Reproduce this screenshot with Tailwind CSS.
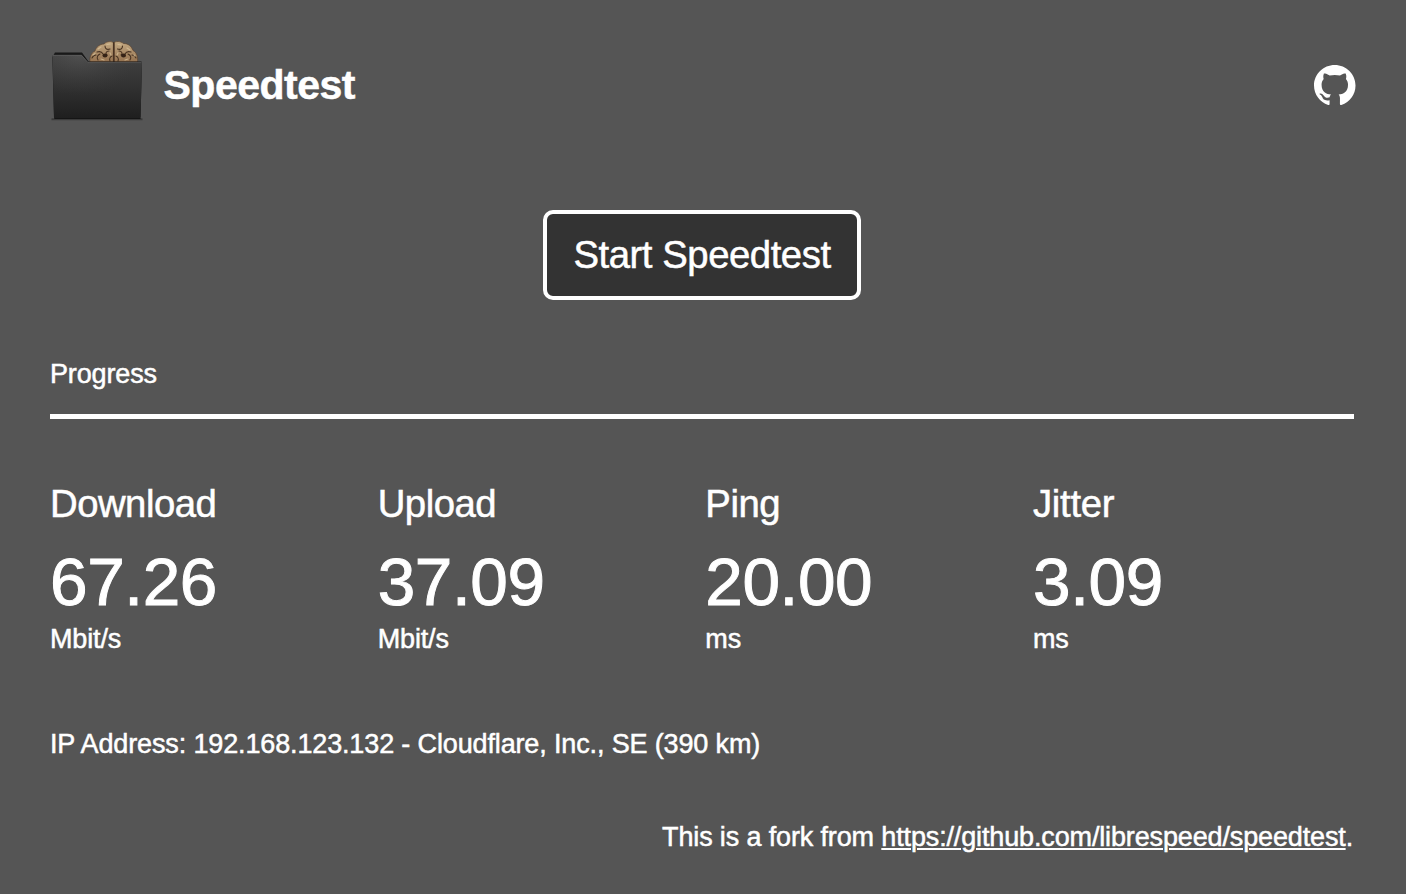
<!DOCTYPE html>
<html lang="en">
<head>
<meta charset="utf-8">
<title>Speedtest</title>
<script src="https://cdn.jsdelivr.net/npm/@tailwindcss/browser@4"></script>
</head>
<body class="h-[894px] overflow-hidden bg-[#555] pl-[50px] pr-[52px] text-[27px] leading-8 tracking-[-0.14px] text-white antialiased [-webkit-text-stroke:0.5px_white] font-['Helvetica','Liberation_Sans',sans-serif]">
<header class="flex h-[170px] items-center">
  <svg class="-ml-0.5 -mt-2 h-[84px] w-[98px] shrink-0" viewBox="48 38 98 84" aria-hidden="true">
    <defs>
      <linearGradient id="front" x1="0" y1="0" x2="0" y2="1"><stop offset="0" stop-color="#414141"/><stop offset=".45" stop-color="#333"/><stop offset="1" stop-color="#1e1e1e"/></linearGradient>
      <radialGradient id="sheen" cx=".3" cy="0" r=".65"><stop offset="0" stop-color="#666" stop-opacity=".4"/><stop offset="1" stop-color="#444" stop-opacity="0"/></radialGradient>
      <linearGradient id="brain" x1="0" y1="0" x2="0" y2="1"><stop offset="0" stop-color="#c4aa83"/><stop offset="1" stop-color="#94714f"/></linearGradient>
      <filter id="fold" x="-10%" y="-10%" width="120%" height="120%"><feGaussianBlur stdDeviation=".4"/></filter>
    </defs>
    <path d="M51.500 118.300H142.500" stroke="#222" stroke-opacity=".5" stroke-width="2"/>
    <g filter="url(#fold)">
      <path d="M90 61c-.5-5 1-9 5-11 1-4 5-7 9-7 3-3 8-3 9.500-1 2-2 7-2 10 .5 5 0 8 3 9.500 7 4 2 5 7 4.500 11.500z" fill="url(#brain)" stroke="#5c442f" stroke-width=".7"/>
      <g fill="none" stroke="#493321" stroke-width="1.100" stroke-linecap="round">
        <path d="M113.800 42v19" stroke-width="1.800"/>
        <path d="M97 51c3-1 5 0 6 2M105 45c0 3 2 4 5 3M98 59c-2-3 0-5 2-6M109 50c-3 0-4 3-2 4M92 57c1-2 2-3 4-3M110 60c-1-2 0-4 2-5M131 51c-3-1-5 0-6 2M122.500 45c0 3-2 4-5 3M130 59c2-3 0-5-2-6M119 50c3 0 4 3 2 4M136 57c-1-2-2-3-4-3M118 60c1-2 0-4-2-5"/>
      </g>
      <g fill="#362416"><ellipse cx="105" cy="54.500" rx="2.500" ry="2"/><ellipse cx="123.500" cy="54.500" rx="2.500" ry="2"/></g>
      <g fill="none" stroke="#dac49c" stroke-width="1.200" stroke-linecap="round" opacity=".7">
        <path d="M98 48l3-2M107 43.500l3-.5M93 54l2-1.500M101 58l3 1M110 52l1 2M118 43.500l3 .5M127 47l3 2M118 52l-1 2M134 54l1 1M125 59l3-1"/>
      </g>
    </g>
    <path d="M53.500 54l1.500-2.500h27l6.500 9h53l.5 2-1.500 54H54L52.300 56z" fill="#191919"/>
    <path d="M52.500 54H81.500l6.500 7.500H142l-1.500 55q0 1.500-1.500 1.500H55.500q-1.500 0-1.500-1.500z" fill="url(#front)"/>
    <path d="M52.500 54H81.500l6.500 7.500H142l-1.500 55H54z" fill="url(#sheen)"/>
    <path d="M53 54.300H81.500l6.500 7.300H141.500" fill="none" stroke="#626262" stroke-width=".7"/>
    <path d="M54.500 117.500H140.500" stroke="#151515"/>
  </svg>
  <h1 class="ml-[17.5px] text-[41px] leading-none font-bold tracking-[-0.5px]">Speedtest</h1>
  <a class="-mr-[1.5px] ml-auto" href="https://github.com" aria-label="GitHub">
    <svg class="h-[41px] w-[41.5px]" viewBox="0 0 16 16" preserveAspectRatio="none" fill="white"><path d="M8 0C3.580 0 0 3.580 0 8c0 3.540 2.290 6.530 5.470 7.590.4.070.55-.17.55-.38 0-.19-.01-.82-.01-1.490-2.010.37-2.530-.49-2.690-.94-.09-.23-.48-.94-.82-1.130-.28-.15-.68-.52-.01-.53.63-.01 1.080.58 1.230.82.72 1.210 1.870.87 2.330.66.07-.52.28-.87.51-1.070-1.780-.2-3.640-.89-3.640-3.950 0-.87.31-1.590.82-2.150-.08-.2-.36-1.020.08-2.120 0 0 .67-.21 2.200.82.64-.18 1.320-.27 2-.27s1.360.09 2 .27c1.530-1.040 2.200-.82 2.200-.82.44 1.100.16 1.920.08 2.120.51.56.82 1.270.82 2.150 0 3.070-1.870 3.750-3.650 3.950.29.25.54.73.54 1.480 0 1.070-.01 1.930-.01 2.200 0 .21.15.46.55.38A8 8 0 0 0 16 8c0-4.420-3.580-8-8-8z"/></svg>
  </a>
</header>
<main>
  <button class="mx-auto mt-10 mb-[58px] block h-[90px] w-[318px] rounded-[10px] border-4 border-white bg-[#333] text-[38.3px] leading-none tracking-[-0.45px] whitespace-nowrap">Start Speedtest</button>
  <p>Progress</p>
  <div class="mt-6 h-[5px] bg-white"></div>
  <section class="mt-[61px] grid grid-cols-4 gap-[6.7px]">
    <div><h2 class="text-[38.3px] leading-[48px] tracking-[-0.5px]">Download</h2><p class="mt-[14px] text-[67.5px] leading-[80px] tracking-[-0.4px] [-webkit-text-stroke:1px_white]">67.26</p><p class="pt-px">Mbit/s</p></div>
    <div><h2 class="text-[38.3px] leading-[48px] tracking-[-0.5px]">Upload</h2><p class="mt-[14px] text-[67.5px] leading-[80px] tracking-[-0.4px] [-webkit-text-stroke:1px_white]">37.09</p><p class="pt-px">Mbit/s</p></div>
    <div><h2 class="text-[38.3px] leading-[48px] tracking-[-0.5px]">Ping</h2><p class="mt-[14px] text-[67.5px] leading-[80px] tracking-[-0.4px] [-webkit-text-stroke:1px_white]">20.00</p><p class="pt-px">ms</p></div>
    <div><h2 class="text-[38.3px] leading-[48px] tracking-[-0.3px]">Jitter</h2><p class="mt-[14px] text-[67.5px] leading-[80px] tracking-[-0.4px] [-webkit-text-stroke:1px_white]">3.09</p><p class="pt-px">ms</p></div>
  </section>
  <p class="mt-[73px] whitespace-nowrap">IP Address: 192.168.123.132 - Cloudflare, Inc., SE (390 km)</p>
</main>
<footer class="mt-[61px] pr-px text-right whitespace-nowrap">This is a fork from <a class="underline decoration-2 underline-offset-2" href="https://github.com/librespeed/speedtest">https://github.com/librespeed/speedtest</a>.</footer>
</body>
</html>
